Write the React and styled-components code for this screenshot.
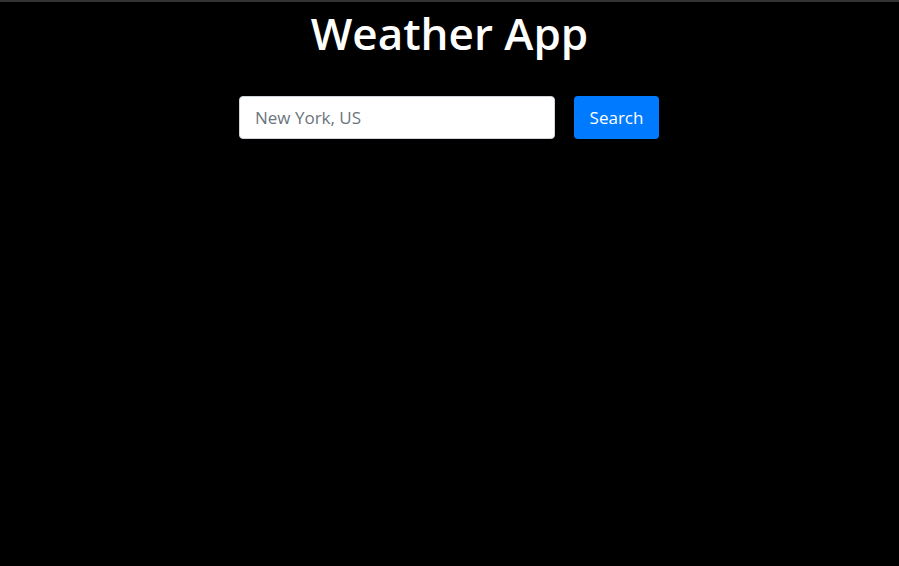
import styled, { createGlobalStyle } from "styled-components"

// Global
const GlobalStyle = createGlobalStyle`
  html, body {
    margin: 0;
    padding: 0;
    background-color: #000;
    font-family: "Open Sans", "Noto Sans", sans-serif;
  }
`

// Styled Components
const Page = styled.main`
  min-height: 566px;
  border-top: 2px solid #333;
  box-sizing: border-box;
  display: flex;
  flex-direction: column;
  align-items: center;
`
const Title = styled.h1`
  color: #fff;
  font-size: 44px;
  font-weight: 600;
  margin: 0;
  line-height: 62px;
`
const SearchForm = styled.form`
  display: flex;
  gap: 19px;
  margin-top: 32px;
  margin-right: 1px;
`
const Input = styled.input`
  width: 316px;
  height: 43px;
  box-sizing: border-box;
  padding: 0 15px;
  font-family: inherit;
  font-size: 17px;
  color: #495057;
  background-color: #fff;
  border: 1px solid #ced4da;
  border-radius: 4px;
  outline: none;
  &::placeholder {
    color: #6c757d;
  }
`
const Button = styled.button`
  width: 85px;
  height: 43px;
  font-family: inherit;
  font-size: 17px;
  color: #fff;
  background-color: #007bff;
  border: none;
  border-radius: 4px;
  cursor: pointer;
  &:hover {
    background-color: #0069d9;
  }
`

// React component
export default function App() {
  return (
    <>
      <GlobalStyle />
      <Page>
        <Title>Weather App</Title>
        <SearchForm onSubmit={e => e.preventDefault()}>
          <Input type="text" placeholder="New York, US" />
          <Button type="submit">Search</Button>
        </SearchForm>
      </Page>
    </>
  )
}
